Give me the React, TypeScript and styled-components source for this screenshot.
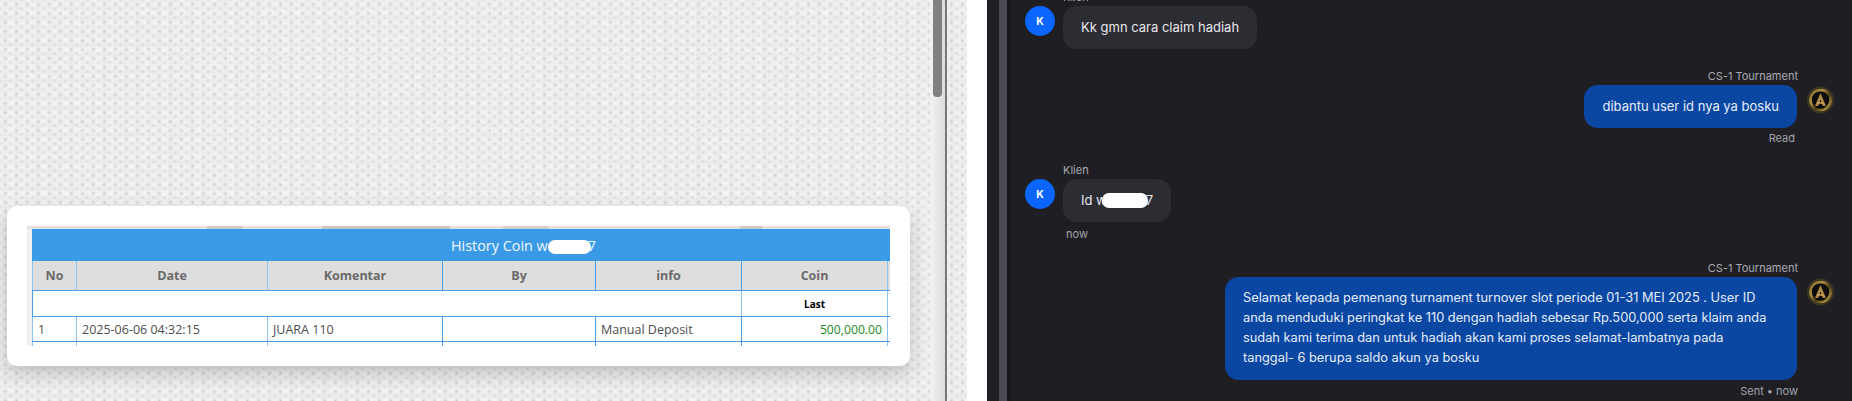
import React from 'react';
import styled, { createGlobalStyle } from 'styled-components';

const GlobalStyle = createGlobalStyle`
  html, body {
    margin: 0;
    height: 100%;
    overflow: hidden;
    background: #fff;
  }
`;

const Screen = styled.div`
  display: flex;
  width: 1852px;
  height: 401px;
  overflow: hidden;
`;

const AdminPane = styled.div`
  flex: 0 0 967px;
  display: flex;
  background-color: #ebebeb;
  background-image:
    radial-gradient(circle at 50% 50%, rgba(196, 196, 196, 0.85) 0, rgba(208, 208, 208, 0.4) 1.2px, transparent 2.6px),
    radial-gradient(circle at 50% 50%, rgba(204, 204, 204, 0.7) 0, rgba(212, 212, 212, 0.3) 1.2px, transparent 2.6px),
    radial-gradient(ellipse at 50% 50%, rgba(255, 255, 255, 0.4) 0, transparent 5px),
    radial-gradient(ellipse at 50% 50%, rgba(255, 255, 255, 0.3) 0, transparent 7px);
  background-size: 11px 9px, 11px 9px, 11px 9px, 17px 13px;
  background-position: 0 0, 5px 4px, 5px 0, 3px 5px;
`;

const AdminMain = styled.div`
  flex: 0 0 930px;
  padding: 206px 0 0 7px;
  box-sizing: border-box;
`;

const Card = styled.div`
  width: 903px;
  height: 160px;
  box-sizing: border-box;
  padding: 20px;
  background: #fff;
  border-radius: 10px;
  box-shadow: 0 8px 18px rgba(0, 0, 0, 0.18);
`;

const TableClip = styled.div`
  height: 120px;
  overflow: hidden;
  background: linear-gradient(#f0f0f0, #f0f0f0) left / 5px 100% no-repeat;
`;

const TopSliver = styled.div`
  height: 3px;
  background: linear-gradient(
    90deg,
    #e2e2e2 0 180px,
    #cccccc 180px 215px,
    #e2e2e2 215px 295px,
    #c6c6c6 295px 423px,
    #e2e2e2 423px 476px,
    #d2d2d2 476px 522px,
    #e2e2e2 522px 713px,
    #cacaca 713px 735px,
    #e2e2e2 735px
  );
`;

const HistoryTable = styled.table`
  margin-left: 5px;
  width: 982px;
  table-layout: fixed;
  border-collapse: collapse;
  font-family: 'Open Sans', 'Noto Sans', sans-serif;
  font-size: 12.5px;
  color: #555;
`;

const Col = styled.col<{ $w: number }>`
  width: ${(p) => p.$w}px;
`;

const TitleCell = styled.th`
  height: 30px;
  padding: 0;
  background: #3a9ae8;
  color: #f2f8fe;
  font-size: 14.4px;
  font-weight: 400;
  border: 1px solid #3a9ae8;
`;

const Redacted = styled.span`
  display: inline-block;
  width: 43px;
  height: 14px;
  margin-right: -3px;
  border-radius: 7px;
  background: #fff;
  vertical-align: -3px;
  position: relative;
`;

const HeadCell = styled.th<{ $soft?: boolean }>`
  height: 29px;
  padding: 0;
  background: #dedede;
  color: #6a6a6a;
  font-size: 12.5px;
  font-weight: 700;
  border: 1px solid ${(p) => (p.$soft ? '#90c4f0' : '#4a9de6')};
  border-bottom-color: #4a9de6;
`;

const Cell = styled.td<{ $soft?: boolean; $end?: boolean }>`
  height: 24px;
  padding: 0 5px;
  border: 1px solid ${(p) => (p.$soft ? '#90c4f0' : '#4a9de6')};
  border-top-color: #4a9de6;
  border-bottom-color: #4a9de6;
  text-align: ${(p) => (p.$end ? 'right' : 'left')};
  white-space: nowrap;
  color: #4d4d4d;
`;

const LastLabel = styled.td`
  height: 25px;
  padding: 0;
  text-align: center;
  font-size: 10px;
  font-weight: 700;
  color: #000;
  border: 1px solid #4a9de6;
  border-left-color: #90c4f0;
  border-right-color: #90c4f0;
`;

const BlankCell = styled.td`
  height: 25px;
  padding: 0;
  border-top: 1px solid #4a9de6;
  border-bottom: 1px solid #4a9de6;
  border-left: 1px solid #4a9de6;
`;

const Amount = styled.span`
  color: #1f8a1f;
  font-size: 12.2px;
`;

const Scrollbar = styled.div`
  flex: 0 0 15px;
  background: linear-gradient(90deg, #f2f2f2, #dcdcdc);
  padding: 0 3px;
  box-sizing: border-box;
`;

const ScrollThumb = styled.div`
  height: 97px;
  background: #808080;
  border-radius: 0 0 4px 4px;
`;

const SplitLine = styled.div`
  flex: 0 0 2px;
  background: #777;
`;

const WhiteGap = styled.div`
  flex: 0 0 20px;
  background: #fff;
`;

const ChatPane = styled.div`
  flex: 1;
  display: flex;
  background: #1f1f23;
  font-family: Inter, 'Noto Sans', sans-serif;
`;

const RailEdge = styled.div`
  flex: 0 0 12px;
`;

const Rail = styled.div`
  flex: 0 0 8px;
  background: #4a4a55;
`;

const RailShade = styled.div`
  flex: 0 0 4px;
  background: #18181b;
`;

const Messages = styled.div`
  flex: 1;
  display: flex;
  flex-direction: column;
  padding: 0 17px 0 14px;
`;

const Group = styled.div<{ $out?: boolean; $gap: number }>`
  display: flex;
  flex-direction: column;
  align-items: ${(p) => (p.$out ? 'flex-end' : 'flex-start')};
  margin-top: ${(p) => p.$gap}px;
  padding: ${(p) => (p.$out ? '0 37px 0 0' : '0 0 0 38px')};
`;

const Sender = styled.div`
  font-size: 11px;
  line-height: 16px;
  margin-bottom: 1px;
  color: #a9a9b2;
`;

const BubbleRow = styled.div<{ $out?: boolean }>`
  display: flex;
  flex-direction: ${(p) => (p.$out ? 'row' : 'row-reverse')};
  align-items: flex-start;
  gap: ${(p) => (p.$out ? 9 : 8)}px;
  margin: ${(p) => (p.$out ? '0 -37px 0 0' : '0 0 0 -38px')};
`;

const Bubble = styled.div<{ $out?: boolean }>`
  box-sizing: border-box;
  max-width: 572px;
  padding: 11px 18px 12px;
  border-radius: 14px;
  font-size: 13px;
  line-height: 20px;
  background: ${(p) => (p.$out ? '#0a47a3' : '#2c2c33')};
  color: ${(p) => (p.$out ? '#e6edf8' : '#e8e8ec')};
`;

const WideBubble = styled(Bubble)`
  width: 572px;
  padding-right: 24px;
  font-size: 12.8px;
`;

const ChatRedacted = styled(Redacted)`
  width: 46px;
  height: 15px;
  margin-left: -5px;
  margin-right: -2px;
`;

const Avatar = styled.div`
  flex: 0 0 30px;
  width: 30px;
  height: 30px;
  border-radius: 50%;
  background: #0a66ff;
  color: #fff;
  font-size: 10.5px;
  font-weight: 700;
  display: flex;
  align-items: center;
  justify-content: center;
`;

const Meta = styled.div<{ $inset: number; $top: number }>`
  font-size: 11px;
  line-height: 16px;
  margin-top: ${(p) => p.$top}px;
  color: #a3a3ac;
  padding: 0 ${(p) => p.$inset}px;
`;

function BrandAvatar({ id }: { id: string }): React.ReactElement {
  return (
    <svg width="29" height="30" viewBox="0 0 29 30" style={{ flex: '0 0 29px' }}>
      <defs>
        <linearGradient id={`ring-${id}`} x1="0" y1="0" x2="1" y2="1">
          <stop offset="0" stopColor="#6e5c28" />
          <stop offset="0.3" stopColor="#b0943e" />
          <stop offset="0.6" stopColor="#4c4019" />
          <stop offset="0.85" stopColor="#a48a36" />
          <stop offset="1" stopColor="#3e351a" />
        </linearGradient>
        <filter id={`soft-${id}`} x="-10%" y="-10%" width="120%" height="120%">
          <feGaussianBlur stdDeviation="0.5" />
        </filter>
      </defs>
      <g filter={`url(#soft-${id})`}>
        <circle cx="14.5" cy="15" r="13.5" fill="#3a3422" />
        <circle cx="14.5" cy="15" r="10" fill="#0c0c0b" stroke={`url(#ring-${id})`} strokeWidth="2.6" />
        <path d="M14.5 8 L20 21 H16.8 L14.5 14.6 L12.2 21 H9 Z" fill="#b08c44" />
        <rect x="11.4" y="17.2" width="6.2" height="1.5" fill="#cfae60" />
      </g>
    </svg>
  );
}

export default function App(): React.ReactElement {
  return (
    <Screen>
      <GlobalStyle />
      <AdminPane>
        <AdminMain>
          <Card>
            <TableClip>
              <TopSliver />
              <HistoryTable>
                <colgroup>
                  <Col $w={44} />
                  <Col $w={191} />
                  <Col $w={175} />
                  <Col $w={153} />
                  <Col $w={146} />
                  <Col $w={146} />
                  <Col $w={127} />
                </colgroup>
                <thead>
                  <tr>
                    <TitleCell colSpan={7}>
                      History Coin w<Redacted />7
                    </TitleCell>
                  </tr>
                  <tr>
                    <HeadCell $soft>No</HeadCell>
                    <HeadCell $soft>Date</HeadCell>
                    <HeadCell>Komentar</HeadCell>
                    <HeadCell>By</HeadCell>
                    <HeadCell>info</HeadCell>
                    <HeadCell $soft>Coin</HeadCell>
                    <HeadCell $soft />
                  </tr>
                </thead>
                <tbody>
                  <tr>
                    <BlankCell colSpan={5} />
                    <LastLabel>Last</LastLabel>
                    <LastLabel />
                  </tr>
                  <tr>
                    <Cell $soft>1</Cell>
                    <Cell $soft>2025-06-06 04:32:15</Cell>
                    <Cell>JUARA 110</Cell>
                    <Cell />
                    <Cell>Manual Deposit</Cell>
                    <Cell $soft $end>
                      <Amount>500,000.00</Amount>
                    </Cell>
                    <Cell $soft />
                  </tr>
                  <tr>
                    <Cell $soft />
                    <Cell $soft />
                    <Cell />
                    <Cell />
                    <Cell />
                    <Cell $soft />
                    <Cell $soft />
                  </tr>
                </tbody>
              </HistoryTable>
            </TableClip>
          </Card>
        </AdminMain>
        <Scrollbar>
          <ScrollThumb />
        </Scrollbar>
        <SplitLine />
      </AdminPane>
      <WhiteGap />
      <ChatPane>
        <RailEdge />
        <Rail />
        <RailShade />
        <Messages>
          <Group $gap={-11}>
            <Sender>Klien</Sender>
            <BubbleRow>
              <Bubble>Kk gmn cara claim hadiah</Bubble>
              <Avatar>K</Avatar>
            </BubbleRow>
          </Group>
          <Group $out $gap={19}>
            <Sender>CS-1 Tournament</Sender>
            <BubbleRow $out>
              <Bubble $out>dibantu user id nya ya bosku</Bubble>
              <BrandAvatar id="a" />
            </BubbleRow>
            <Meta $inset={3} $top={2}>Read</Meta>
          </Group>
          <Group $gap={16}>
            <Sender>Klien</Sender>
            <BubbleRow>
              <Bubble>
                Id w<ChatRedacted />7
              </Bubble>
              <Avatar>K</Avatar>
            </BubbleRow>
            <Meta $inset={3} $top={4}>now</Meta>
          </Group>
          <Group $out $gap={18}>
            <Sender>CS-1 Tournament</Sender>
            <BubbleRow $out>
              <WideBubble $out>
                Selamat kepada pemenang turnament turnover slot periode 01-31 MEI 2025 . User ID anda
                menduduki peringkat ke 110 dengan hadiah sebesar Rp.500,000 serta klaim anda sudah
                kami terima dan untuk hadiah akan kami proses selamat-lambatnya pada tanggal- 6 berupa
                saldo akun ya bosku
              </WideBubble>
              <BrandAvatar id="b" />
            </BubbleRow>
            <Meta $inset={0} $top={3}>Sent • now</Meta>
          </Group>
        </Messages>
      </ChatPane>
    </Screen>
  );
}
